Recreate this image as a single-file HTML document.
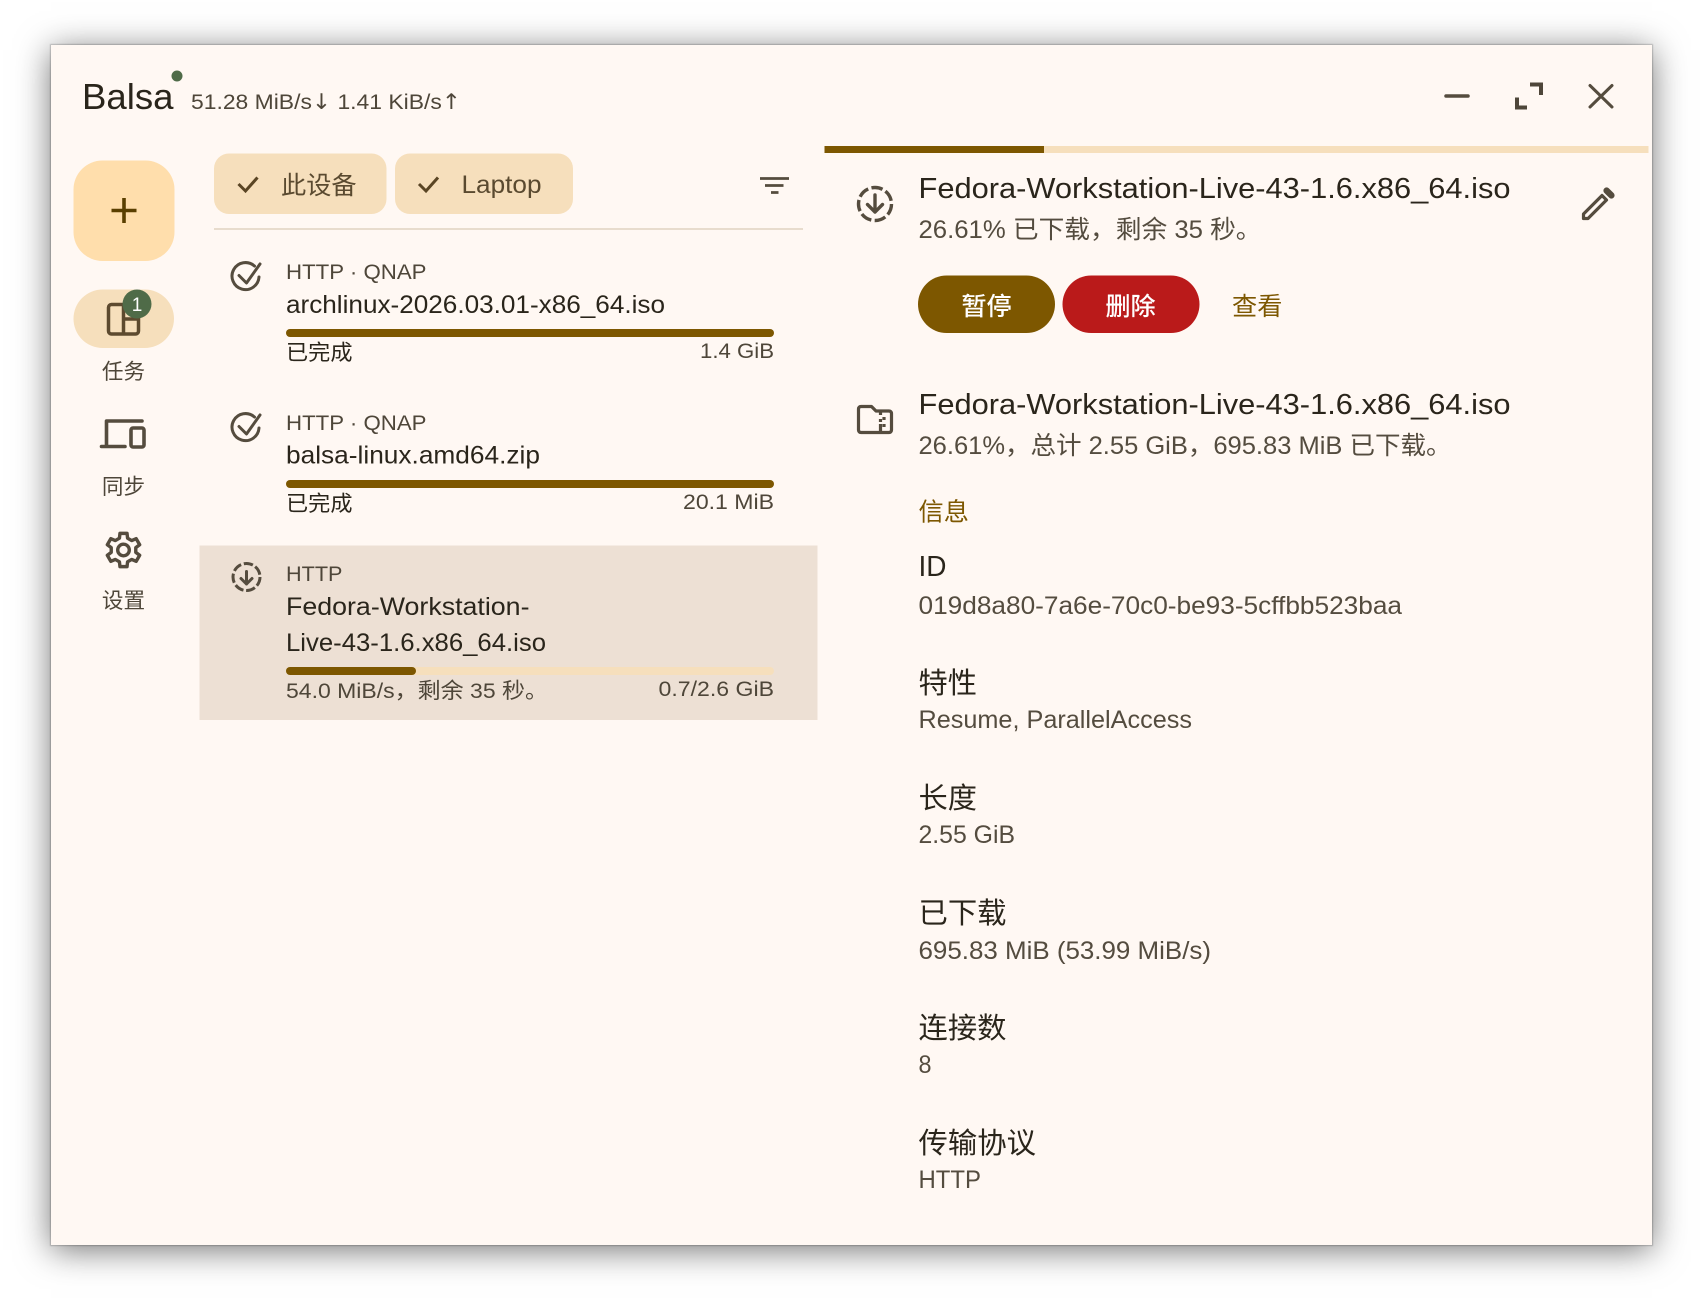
<!DOCTYPE html>
<html lang="zh">
<head>
<meta charset="utf-8">
<title>Balsa</title>
<style>
html,body{margin:0;padding:0;width:1704px;height:1304px;background:#fff;overflow:hidden}
#win{position:absolute;left:51px;top:45px;width:1601px;height:1200px;background:#fff8f3;box-shadow:0 0 1px 1px rgba(0,0,0,.2),0 5px 32px rgba(0,0,0,.55)}
svg{position:absolute;left:0;top:0}
text{font-family:"Liberation Sans","Noto Sans CJK SC",sans-serif;white-space:pre}
.n{font-size:25.2px;fill:#2a251b}
.s{font-size:21.6px;fill:#4e4639}
.d{font-size:21.6px;fill:#2a251b}
.t{font-size:28.8px;fill:#2a251b}
.v{font-size:25.2px;fill:#544c3f}
.i{fill:none;stroke:#554c3e;stroke-width:3;stroke-linecap:round;stroke-linejoin:round}
</style>
</head>
<body>
<div id="win"></div>
<svg width="1704" height="1304" viewBox="0 0 1704 1304" xmlns="http://www.w3.org/2000/svg">
  <!-- header -->
  <text x="82" y="109" font-size="36" fill="#2a251b" textLength="91.5" lengthAdjust="spacingAndGlyphs">Balsa</text>
  <circle cx="177" cy="76" r="5.5" fill="#4f6b48"/>
  <text x="191" y="109" class="s" textLength="270" lengthAdjust="spacingAndGlyphs">51.28 MiB/s<tspan font-family="DejaVu Sans">↓</tspan> 1.41 KiB/s<tspan font-family="DejaVu Sans">↑</tspan></text>

  <!-- window controls -->
  <path d="M1446 96H1468" class="i" style="stroke-width:3.5"/>
  <path d="M1530 84.5H1541V95M1517 97.5V107.5H1527" fill="none" stroke="#4e4639" stroke-width="4"/>
  <path d="M1590 85.5L1612 107M1612 85.5L1590 107" class="i"/>

  <!-- rail -->
  <rect x="73.5" y="160.5" width="101" height="100.5" rx="29" fill="#ffdeac"/>
  <path d="M124 198V223M111.5 210.5H136.5" fill="none" stroke="#5a3f00" stroke-width="3.6"/>

  <rect x="73.5" y="289.5" width="100.5" height="58.5" rx="29.2" fill="#f6dfbc"/>
  <g fill="none" stroke="#5d4a2f" stroke-width="3.5" stroke-linejoin="round">
    <rect x="108.5" y="304.5" width="30" height="29.5" rx="3"/>
    <path d="M123.5 304.5V334M123.5 319H138.5"/>
  </g>
  <circle cx="137" cy="304" r="14.5" fill="#4f6b48"/>
  <text x="137" y="311" font-size="19" fill="#fff" text-anchor="middle">1</text>
  <text x="123.5" y="379" class="s" text-anchor="middle">任务</text>

  <path d="M142 421H106.5V445M101.5 446.5H125" class="i" style="stroke-width:3.6"/>
  <rect x="131" y="428" width="13" height="19" rx="2" class="i" style="stroke-width:3.6"/>
  <text x="123.5" y="494" class="s" text-anchor="middle">同步</text>

  <g transform="translate(123.5,550)">
    <polygon class="i" style="stroke-width:3.4" points="-4.07,-11.82 -3.53,-16.63 3.53,-16.63 4.07,-11.82 8.2,-9.43 12.64,-11.37 16.17,-5.26 12.27,-2.39 12.27,2.39 16.17,5.26 12.64,11.37 8.2,9.43 4.07,11.82 3.53,16.63 -3.53,16.63 -4.07,11.82 -8.2,9.43 -12.64,11.37 -16.17,5.26 -12.27,2.39 -12.27,-2.39 -16.17,-5.26 -12.64,-11.37 -8.2,-9.43"/>
    <circle r="5.8" class="i" style="stroke-width:3.4"/>
  </g>
  <text x="123.5" y="608" class="s" text-anchor="middle">设置</text>

  <!-- chips -->
  <rect x="214" y="153.5" width="172.5" height="60.5" rx="15" fill="#f6dfbc"/>
  <path d="M238.5 184L245.5 191L257.5 177.5" fill="none" stroke="#5a4524" stroke-width="3"/>
  <text x="281" y="194" font-size="25.2" fill="#5a4a30">此设备</text>
  <rect x="395" y="153.5" width="178" height="60.5" rx="15" fill="#f6dfbc"/>
  <path d="M419 184L426 191L438 177.5" fill="none" stroke="#5a4524" stroke-width="3"/>
  <text x="461.5" y="193" font-size="25.2" fill="#5a4a30" textLength="80" lengthAdjust="spacingAndGlyphs">Laptop</text>
  <path d="M760 178.5H789M765 185.5H783.5M771 192.5H778.5" fill="none" stroke="#554c3e" stroke-width="2.8"/>
  <rect x="214" y="228" width="589" height="2" fill="#e8dccd"/>

  <!-- task 1 -->
  <path class="i" d="M254.5 266A13.5 13.5 0 1 0 259 277M239 275.5L246.5 283L260 264"/>
  <text x="286" y="279" class="s" textLength="140.5" lengthAdjust="spacingAndGlyphs">HTTP · QNAP</text>
  <text x="286" y="313" class="n" textLength="379" lengthAdjust="spacingAndGlyphs">archlinux-2026.03.01-x86_64.iso</text>
  <rect x="286" y="329" width="488" height="8" rx="4" fill="#7d5700"/>
  <text x="286" y="360" class="d" textLength="66.5" lengthAdjust="spacingAndGlyphs">已完成</text>
  <text x="700" y="358" class="s" textLength="74" lengthAdjust="spacingAndGlyphs">1.4 GiB</text>

  <!-- task 2 -->
  <path class="i" transform="translate(0,151)" d="M254.5 266A13.5 13.5 0 1 0 259 277M239 275.5L246.5 283L260 264"/>
  <text x="286" y="430" class="s" textLength="140.5" lengthAdjust="spacingAndGlyphs">HTTP · QNAP</text>
  <text x="286" y="463.5" class="n" textLength="254" lengthAdjust="spacingAndGlyphs">balsa-linux.amd64.zip</text>
  <rect x="286" y="480" width="488" height="8" rx="4" fill="#7d5700"/>
  <text x="286" y="511" class="d" textLength="66.5" lengthAdjust="spacingAndGlyphs">已完成</text>
  <text x="683" y="509" class="s" textLength="91" lengthAdjust="spacingAndGlyphs">20.1 MiB</text>

  <!-- task 3 selected -->
  <rect x="199.5" y="545.5" width="618" height="174.5" fill="#ede0d4"/>
  <circle cx="246.5" cy="577" r="13.5" fill="none" stroke="#554c3e" stroke-width="3" stroke-dasharray="9.4 2.72"/>
  <path class="i" d="M246.5 571.5V584M241 578.5L246.5 584L252 578.5"/>
  <text x="286" y="581" class="s" textLength="56.5" lengthAdjust="spacingAndGlyphs">HTTP</text>
  <text x="286" y="615" class="n" textLength="243.5" lengthAdjust="spacingAndGlyphs">Fedora-Workstation-</text>
  <text x="286" y="651" class="n" textLength="260" lengthAdjust="spacingAndGlyphs">Live-43-1.6.x86_64.iso</text>
  <rect x="286" y="667" width="488" height="8" rx="4" fill="#f6dfbc"/>
  <rect x="286" y="667" width="130" height="8" rx="4" fill="#7d5700"/>
  <text x="286" y="698" class="s" textLength="262" lengthAdjust="spacingAndGlyphs">54.0 MiB/s，剩余 35 秒。</text>
  <text x="658.5" y="696" class="s" textLength="115.5" lengthAdjust="spacingAndGlyphs">0.7/2.6 GiB</text>

  <!-- detail -->
  <rect x="824.5" y="146" width="824" height="7" fill="#f6dfbc"/>
  <rect x="824.5" y="146" width="219.5" height="7" fill="#7d5700"/>
  <circle cx="875" cy="204" r="16.5" fill="none" stroke="#554c3e" stroke-width="3.4" stroke-dasharray="11.4 3.41"/>
  <path class="i" d="M875 195V212M867.5 204.5L875 212L882.5 204.5" style="stroke-width:3.4"/>
  <text x="918.5" y="198" class="t" textLength="592" lengthAdjust="spacingAndGlyphs">Fedora-Workstation-Live-43-1.6.x86_64.iso</text>
  <text x="918.5" y="238" class="v" textLength="343" lengthAdjust="spacingAndGlyphs">26.61% 已下载，剩余 35 秒。</text>
  <path class="i" d="M1583.5 218.5V214L1602 195.5L1606.5 200L1588 218.5Z" style="stroke-width:3.2"/>
  <path d="M1606.6 190.6L1611.4 195.4" fill="none" stroke="#554c3e" stroke-width="6.4" stroke-linecap="round"/>

  <rect x="918" y="275.5" width="137" height="57.5" rx="28.7" fill="#7d5700"/>
  <text x="986.5" y="315" font-size="25.2" font-weight="500" fill="#fff" text-anchor="middle">暂停</text>
  <rect x="1062.5" y="275.5" width="137" height="57.5" rx="28.7" fill="#ba1a1a"/>
  <text x="1130.5" y="315" font-size="25.2" font-weight="500" fill="#fff" text-anchor="middle">删除</text>
  <text x="1232" y="315" font-size="25.2" fill="#7d5700">查看</text>

  <path class="i" d="M861 406.5H871.5L876 411H889C890.5 411 891.5 412 891.5 413.5V430C891.5 431.5 890.5 432.5 889 432.5H861C859.5 432.5 858.5 431.5 858.5 430V409C858.5 407.5 859.5 406.5 861 406.5Z" style="stroke-width:3.2"/>
  <path d="M880.5 411V415M880.5 424V432M884 417V420M884 424V427M880.5 419V422" fill="none" stroke="#554c3e" stroke-width="3.2"/>
  <text x="918.5" y="414" class="t" textLength="592" lengthAdjust="spacingAndGlyphs">Fedora-Workstation-Live-43-1.6.x86_64.iso</text>
  <text x="918.5" y="454" class="v" textLength="533" lengthAdjust="spacingAndGlyphs">26.61%，总计 2.55 GiB，695.83 MiB 已下载。</text>

  <text x="918.5" y="520.5" font-size="25.2" fill="#7d5700">信息</text>

  <text x="918.5" y="576" class="t" textLength="28" lengthAdjust="spacingAndGlyphs">ID</text>
  <text x="918.5" y="614" class="v" textLength="483.5" lengthAdjust="spacingAndGlyphs">019d8a80-7a6e-70c0-be93-5cffbb523baa</text>

  <text x="918.5" y="693" class="t" textLength="58.5" lengthAdjust="spacingAndGlyphs">特性</text>
  <text x="918.5" y="728" class="v" textLength="273.5" lengthAdjust="spacingAndGlyphs">Resume, ParallelAccess</text>

  <text x="918.5" y="808" class="t" textLength="58.5" lengthAdjust="spacingAndGlyphs">长度</text>
  <text x="918.5" y="843" class="v" textLength="96.5" lengthAdjust="spacingAndGlyphs">2.55 GiB</text>

  <text x="918.5" y="923" class="t" textLength="88" lengthAdjust="spacingAndGlyphs">已下载</text>
  <text x="918.5" y="959" class="v" textLength="292.5" lengthAdjust="spacingAndGlyphs">695.83 MiB (53.99 MiB/s)</text>

  <text x="918.5" y="1038" class="t" textLength="88" lengthAdjust="spacingAndGlyphs">连接数</text>
  <text x="918.5" y="1073" class="v" textLength="13" lengthAdjust="spacingAndGlyphs">8</text>

  <text x="918.5" y="1153" class="t" textLength="117.5" lengthAdjust="spacingAndGlyphs">传输协议</text>
  <text x="918.5" y="1188" class="v" textLength="62.5" lengthAdjust="spacingAndGlyphs">HTTP</text>
</svg>
</body>
</html>
